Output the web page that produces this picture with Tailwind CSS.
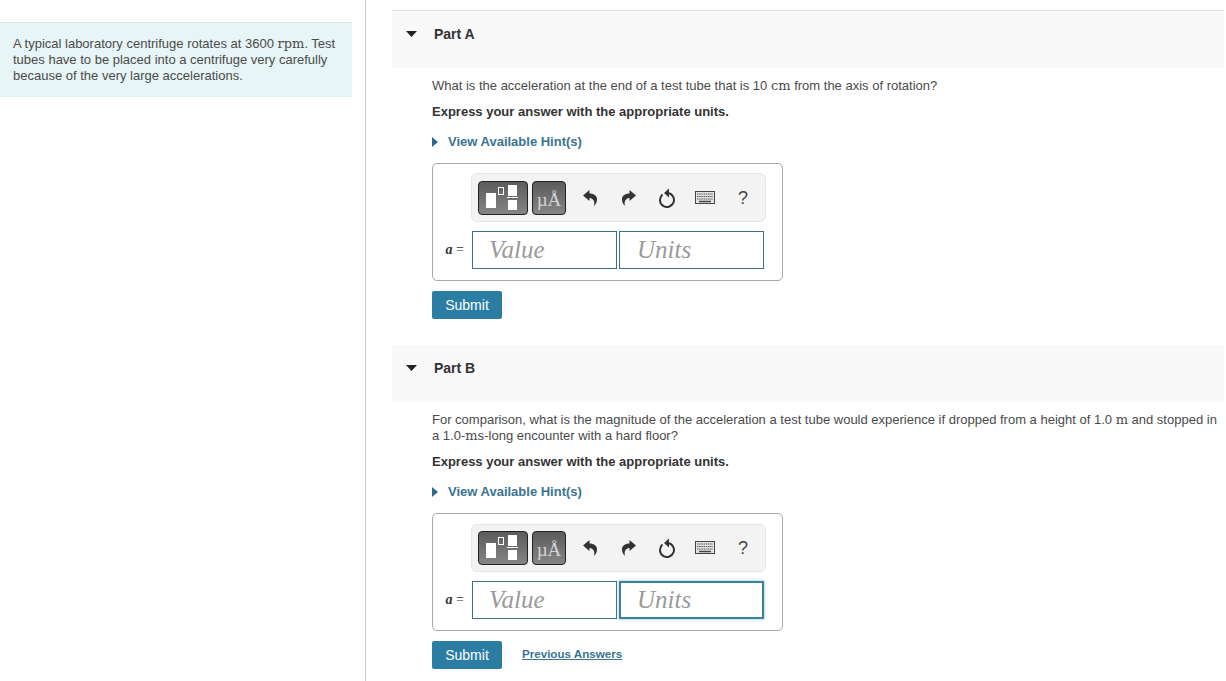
<!DOCTYPE html>
<html lang="en">
<head>
  <meta charset="UTF-8" />
  <title>Part A and Part B</title>
  <script src="https://cdn.jsdelivr.net/npm/@tailwindcss/browser@4"></script>
</head>
<body class="bg-white font-['Liberation_Sans',Arial,sans-serif] text-[13px] leading-[16px] text-[#4a4a4a]">
  <div class="flex w-[1226px] h-[681px] overflow-hidden">

    <!-- Left intro -->
    <div class="w-[366px] shrink-0 border-r border-[#c3ced6] pt-[22px] pr-[13px]">
      <div class="bg-[#e8f5f6] border-t border-[#dbe3e5] pl-[13px] pr-[10px] pt-[13px] pb-[13px] h-[75px]">
        A typical laboratory centrifuge rotates at 3600 <span class="font-['DejaVu_Serif',serif] text-[13px] leading-none">rpm</span>. Test tubes have to be placed into a centrifuge very carefully because of the very large accelerations.
      </div>
    </div>

    <!-- Parts -->
    <div class="w-[832px] ml-[26px] pt-[10px] shrink-0">

      <!-- Part A -->
      <div class="h-[58px] bg-[#f9f9f9] border-t border-[#e2e2e2] flex items-start pt-[15px]">
        <svg class="w-[11px] h-[6px] ml-[14px] mt-[5px]" viewBox="0 0 11 6"><polygon points="0,0 11,0 5.5,6" fill="#222"/></svg>
        <span class="ml-[17px] font-bold text-[14px] text-[#333]">Part A</span>
      </div>
      <div class="pl-[40px]">
        <p class="mt-[10px]">What is the acceleration at the end of a test tube that is 10 <span class="font-['DejaVu_Serif',serif] text-[13px] leading-none">cm</span> from the axis of rotation?</p>
        <p class="mt-[10px] font-bold text-[#333]">Express your answer with the appropriate units.</p>
        <div class="mt-[14px] flex items-center font-bold text-[#3a7391]">
          <svg class="w-[6px] h-[10px]" viewBox="0 0 6 10"><polygon points="0,0 6,5 0,10" fill="#2d6a8a"/></svg>
          <span class="ml-[10px]">View Available Hint(s)</span>
        </div>

        <div class="mt-[13px] w-[351px] h-[118px] border border-[#a8a8a8] rounded-[5px] pt-[9px]">
          <div class="ml-[38px] w-[295px] h-[49px] bg-[#f3f3f3] border border-[#e6e6e6] rounded-[6px] flex items-center pl-[6px]">
            <div class="w-[50px] h-[34px] rounded-[4px] border border-[#222] bg-gradient-to-b from-[#5c5c5c] to-[#858585]">
              <svg width="48" height="32" viewBox="0 0 48 32"><rect x="7" y="11" width="10" height="15" fill="#fff"/><rect x="19.5" y="5.5" width="5" height="7" fill="none" stroke="#fff"/><rect x="29" y="3" width="9" height="11" fill="#fff"/><rect x="28" y="15" width="11" height="1" fill="#fff"/><rect x="29" y="18" width="9" height="10" fill="#fff"/></svg>
            </div>
            <div class="ml-[4px] w-[34px] h-[34px] rounded-[4px] border border-[#222] bg-gradient-to-b from-[#5c5c5c] to-[#858585] flex items-end justify-center pb-[4px] font-['Liberation_Serif',serif] text-[19px] leading-[20px] text-[#d4d4d4]">µÅ</div>
            <svg class="ml-[17px] w-[15px] h-[17px]" viewBox="0 0 15 17"><path d="M0 6.500 6.500 1V4.500C11 4.500 14.500 7 14 11 13.800 13.500 12.500 15.500 11 17 12 13 11 9.500 6.500 9V12Z" fill="#333"/></svg>
            <svg class="ml-[23px] w-[15px] h-[17px]" viewBox="0 0 15 17"><path d="M15 6.500 8.500 1V4.500C4 4.500 .5 7 1 11 1.200 13.500 2.500 15.500 4 17 3 13 4 9.500 8.500 9V12Z" fill="#333"/></svg>
            <svg class="ml-[22px] w-[18px] h-[20px]" viewBox="0 0 18 20"><path d="M4.500 6.600A7 7 0 1 0 10 5.070" fill="none" stroke="#333" stroke-width="2"/><polygon points="6,5 11,.5 11,9.500" fill="#333"/></svg>
            <svg class="ml-[19px] w-[20px] h-[13px]" viewBox="0 0 20 13"><rect x="0.500" y="0.500" width="19" height="12" fill="#e4e4e4" stroke="#444"/><path d="M2 3H18M2 5.500H18M2 8H18" stroke="#555" stroke-dasharray="1.500 0.700"/><path d="M4 10.500H16" stroke="#444" stroke-width="1.500"/></svg>
            <span class="ml-[23px] text-[18px] text-[#444]">?</span>
          </div>
          <div class="flex items-center mt-[9px]">
            <span class="w-[39px] text-right pr-[8px] font-['Liberation_Serif',serif] text-[14px] text-[#333]"><i class="font-bold">a</i> =</span>
            <div class="w-[145px] h-[38px] border border-[#3e7087] pl-[16px] font-['Liberation_Serif',serif] italic text-[25px] leading-[36px] text-[#9a9a9a]">Value</div>
            <div class="ml-[2px] w-[145px] h-[38px] border border-[#3e7087] pl-[17px] font-['Liberation_Serif',serif] italic text-[25px] leading-[36px] text-[#9a9a9a]">Units</div>
          </div>
        </div>

        <button class="mt-[10px] block w-[70px] h-[28px] bg-[#2b7da3] rounded-[2px] text-white text-[14px]">Submit</button>
      </div>

      <!-- Part B -->
      <div class="mt-[26px] h-[56px] bg-[#f9f9f9] flex items-start pt-[15px]">
        <svg class="w-[11px] h-[6px] ml-[14px] mt-[5px]" viewBox="0 0 11 6"><polygon points="0,0 11,0 5.5,6" fill="#222"/></svg>
        <span class="ml-[17px] font-bold text-[14px] text-[#333]">Part B</span>
      </div>
      <div class="pl-[40px]">
        <p class="mt-[11px] w-[792px]">For comparison, what is the magnitude of the acceleration a test tube would experience if dropped from a height of 1.0 <span class="font-['DejaVu_Serif',serif] text-[13px] leading-none">m</span> and stopped in a 1.0-<span class="font-['DejaVu_Serif',serif] text-[13px] leading-none">ms</span>-long encounter with a hard floor?</p>
        <p class="mt-[10px] font-bold text-[#333]">Express your answer with the appropriate units.</p>
        <div class="mt-[14px] flex items-center font-bold text-[#3a7391]">
          <svg class="w-[6px] h-[10px]" viewBox="0 0 6 10"><polygon points="0,0 6,5 0,10" fill="#2d6a8a"/></svg>
          <span class="ml-[10px]">View Available Hint(s)</span>
        </div>

        <div class="mt-[13px] w-[351px] h-[118px] border border-[#a8a8a8] rounded-[5px] pt-[10px]">
          <div class="ml-[38px] w-[295px] h-[48px] bg-[#f3f3f3] border border-[#e6e6e6] rounded-[6px] flex items-center pl-[6px] pb-[1px]">
            <div class="w-[50px] h-[34px] rounded-[4px] border border-[#222] bg-gradient-to-b from-[#5c5c5c] to-[#858585]">
              <svg width="48" height="32" viewBox="0 0 48 32"><rect x="7" y="11" width="10" height="15" fill="#fff"/><rect x="19.5" y="5.5" width="5" height="7" fill="none" stroke="#fff"/><rect x="29" y="3" width="9" height="11" fill="#fff"/><rect x="28" y="15" width="11" height="1" fill="#fff"/><rect x="29" y="18" width="9" height="10" fill="#fff"/></svg>
            </div>
            <div class="ml-[4px] w-[34px] h-[34px] rounded-[4px] border border-[#222] bg-gradient-to-b from-[#5c5c5c] to-[#858585] flex items-end justify-center pb-[4px] font-['Liberation_Serif',serif] text-[19px] leading-[20px] text-[#d4d4d4]">µÅ</div>
            <svg class="ml-[17px] w-[15px] h-[17px]" viewBox="0 0 15 17"><path d="M0 6.500 6.500 1V4.500C11 4.500 14.500 7 14 11 13.800 13.500 12.500 15.500 11 17 12 13 11 9.500 6.500 9V12Z" fill="#333"/></svg>
            <svg class="ml-[23px] w-[15px] h-[17px]" viewBox="0 0 15 17"><path d="M15 6.500 8.500 1V4.500C4 4.500 .5 7 1 11 1.200 13.500 2.500 15.500 4 17 3 13 4 9.500 8.500 9V12Z" fill="#333"/></svg>
            <svg class="ml-[22px] w-[18px] h-[20px]" viewBox="0 0 18 20"><path d="M4.500 6.600A7 7 0 1 0 10 5.070" fill="none" stroke="#333" stroke-width="2"/><polygon points="6,5 11,.5 11,9.500" fill="#333"/></svg>
            <svg class="ml-[19px] w-[20px] h-[13px]" viewBox="0 0 20 13"><rect x="0.500" y="0.500" width="19" height="12" fill="#e4e4e4" stroke="#444"/><path d="M2 3H18M2 5.500H18M2 8H18" stroke="#555" stroke-dasharray="1.500 0.700"/><path d="M4 10.500H16" stroke="#444" stroke-width="1.500"/></svg>
            <span class="ml-[23px] text-[18px] text-[#444]">?</span>
          </div>
          <div class="flex items-center mt-[9px]">
            <span class="w-[39px] text-right pr-[8px] font-['Liberation_Serif',serif] text-[14px] text-[#333]"><i class="font-bold">a</i> =</span>
            <div class="w-[145px] h-[38px] border border-[#3e7087] pl-[16px] font-['Liberation_Serif',serif] italic text-[25px] leading-[36px] text-[#9a9a9a]">Value</div>
            <div class="ml-[2px] w-[145px] h-[38px] border-2 border-[#3e7f9c] shadow-[0_0_3px_#7cc4dc] pl-[16px] font-['Liberation_Serif',serif] italic text-[25px] leading-[34px] text-[#9a9a9a]">Units</div>
          </div>
        </div>

        <div class="mt-[10px] flex items-start">
          <button class="w-[70px] h-[28px] bg-[#2b7da3] rounded-[2px] text-white text-[14px]">Submit</button>
          <a class="ml-[20px] mt-[5px] font-bold text-[11.6px] underline text-[#3a7391]">Previous Answers</a>
        </div>
      </div>
    </div>
  </div>
</body>
</html>
